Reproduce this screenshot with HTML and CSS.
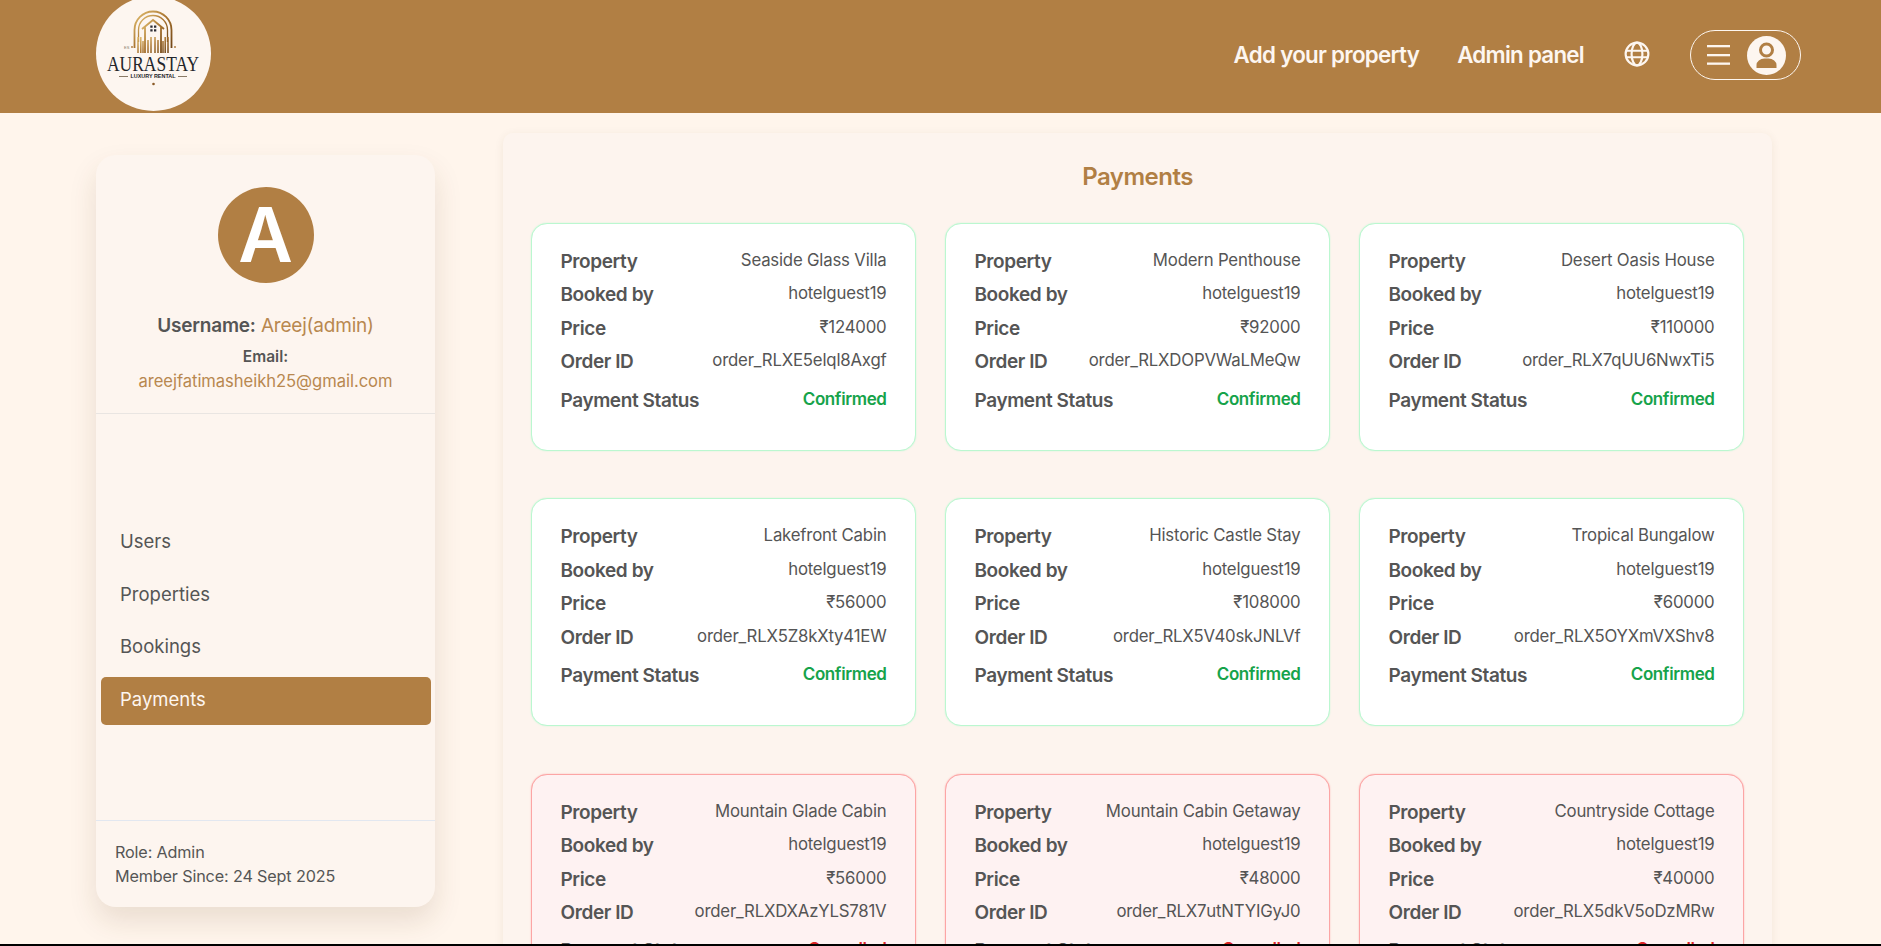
FILE: index.html
```html
<!DOCTYPE html>
<html lang="en">
<head>
<meta charset="utf-8">
<title>Aurastay</title>
<link rel="stylesheet" href="styles.css">
</head>
<body>
<div class="page">
  <header class="topbar">
    <div class="logo">
      <svg viewBox="0 0 115 115" width="115" height="115">
        <defs><linearGradient id="gold" x1="0" y1="0" x2="1" y2="1"><stop offset="0" stop-color="#e2bf70"/><stop offset=".5" stop-color="#a9742f"/><stop offset="1" stop-color="#6f4517"/></linearGradient></defs>
        <circle cx="57.5" cy="57.5" r="57.5" fill="#fdf6f0"/>
        <g fill="none" stroke="url(#gold)">
          <path d="M38.500 52V34a18.500 18.500 0 0 1 37 0V52" stroke-width="1.800"/>
          <path d="M42.500 46V34a14.500 14.500 0 0 1 29 0V46" stroke-width="1.300"/>
          <path d="M46 33l11-9 11 9M49 31V57M65 31V57" stroke-width="1.800"/>
          <path d="M42 41V57M44.800 41V57M47 45V57M52 44V57M55 41V57M59 41V57M62 44V57M67 45V57M69.200 41V57M72 41V57" stroke-width="1.500"/>
        </g>
        <path d="M54.300 29.500h2.300v2.300h-2.300zM58 29.500h2.300v2.300H58zM54.300 33.200h2.300v2.300h-2.300zM58 33.200h2.300v2.300H58z" fill="#2c2c33"/>
        <circle cx="36" cy="51" r="1" fill="#b17f44"/><circle cx="79" cy="51" r="1" fill="#b17f44"/>
        <text class="logo-es" x="28" y="52.500">ES</text>
        <text class="logo-name" x="57" y="75" text-anchor="middle" textLength="92" lengthAdjust="spacingAndGlyphs">AURASTAY</text>
        <text class="logo-sub" x="57" y="82" text-anchor="middle" textLength="45" lengthAdjust="spacingAndGlyphs">LUXURY RENTAL</text>
        <path d="M23 80.500h9M82 80.500h9" stroke="#8a7a66" stroke-width="1"/>
        <circle cx="57.500" cy="88" r="1.300" fill="#8a5a26"/>
      </svg>
    </div>
    <nav class="topnav">
      <a class="toplink">Add your property</a>
      <a class="toplink">Admin panel</a>
      <svg class="globe" viewBox="0 0 24 24" width="26" height="26" fill="none" stroke="#fdf6f0" stroke-width="2"><circle cx="12" cy="12" r="10.500"/><ellipse cx="12" cy="12" rx="5" ry="10.500"/><path d="M1.500 9h21M1.500 15h21"/></svg>
      <div class="menu-pill">
        <svg viewBox="0 0 23 20" width="23" height="20" fill="#fdf6f0"><rect y="0" width="23" height="2.300"/><rect y="9" width="23" height="2.300"/><rect y="17.500" width="23" height="2.300"/></svg>
        <svg viewBox="0 0 39 39" width="39" height="39"><circle cx="19.500" cy="19.500" r="19.500" fill="#fdf6f0"/><circle cx="19.500" cy="14" r="6" fill="none" stroke="#b17f44" stroke-width="3"/><path d="M9.500 32v-3a8 6.500 0 0 1 8-6.500h4a8 6.500 0 0 1 8 6.500v3z" fill="#b17f44"/></svg>
      </div>
    </nav>
  </header>

  <div class="content">
    <aside class="sidebar">
      <div class="profile">
        <div class="avatar">A</div>
        <p class="username"><b>Username:</b> <span class="accent">Areej(admin)</span></p>
        <p class="email-label">Email:</p>
        <p class="email accent">areejfatimasheikh25@gmail.com</p>
      </div>
      <ul class="side-menu">
        <li>Users</li>
        <li>Properties</li>
        <li>Bookings</li>
        <li class="active">Payments</li>
      </ul>
      <div class="side-foot">
        <p>Role: Admin</p>
        <p>Member Since: 24 Sept 2025</p>
      </div>
    </aside>

    <main class="panel">
      <h1 class="panel-title">Payments</h1>
      <div class="cards">
        <article class="card ok">
          <div class="row"><b>Property</b><span>Seaside Glass Villa</span></div>
          <div class="row"><b>Booked by</b><span>hotelguest19</span></div>
          <div class="row"><b>Price</b><span>₹124000</span></div>
          <div class="row"><b>Order ID</b><span>order_RLXE5elql8Axgf</span></div>
          <div class="row status"><b>Payment Status</b><strong>Confirmed</strong></div>
        </article>
        <article class="card ok">
          <div class="row"><b>Property</b><span>Modern Penthouse</span></div>
          <div class="row"><b>Booked by</b><span>hotelguest19</span></div>
          <div class="row"><b>Price</b><span>₹92000</span></div>
          <div class="row"><b>Order ID</b><span>order_RLXDOPVWaLMeQw</span></div>
          <div class="row status"><b>Payment Status</b><strong>Confirmed</strong></div>
        </article>
        <article class="card ok">
          <div class="row"><b>Property</b><span>Desert Oasis House</span></div>
          <div class="row"><b>Booked by</b><span>hotelguest19</span></div>
          <div class="row"><b>Price</b><span>₹110000</span></div>
          <div class="row"><b>Order ID</b><span>order_RLX7qUU6NwxTi5</span></div>
          <div class="row status"><b>Payment Status</b><strong>Confirmed</strong></div>
        </article>
        <article class="card ok">
          <div class="row"><b>Property</b><span>Lakefront Cabin</span></div>
          <div class="row"><b>Booked by</b><span>hotelguest19</span></div>
          <div class="row"><b>Price</b><span>₹56000</span></div>
          <div class="row"><b>Order ID</b><span>order_RLX5Z8kXty41EW</span></div>
          <div class="row status"><b>Payment Status</b><strong>Confirmed</strong></div>
        </article>
        <article class="card ok">
          <div class="row"><b>Property</b><span>Historic Castle Stay</span></div>
          <div class="row"><b>Booked by</b><span>hotelguest19</span></div>
          <div class="row"><b>Price</b><span>₹108000</span></div>
          <div class="row"><b>Order ID</b><span>order_RLX5V40skJNLVf</span></div>
          <div class="row status"><b>Payment Status</b><strong>Confirmed</strong></div>
        </article>
        <article class="card ok">
          <div class="row"><b>Property</b><span>Tropical Bungalow</span></div>
          <div class="row"><b>Booked by</b><span>hotelguest19</span></div>
          <div class="row"><b>Price</b><span>₹60000</span></div>
          <div class="row"><b>Order ID</b><span>order_RLX5OYXmVXShv8</span></div>
          <div class="row status"><b>Payment Status</b><strong>Confirmed</strong></div>
        </article>
        <article class="card bad">
          <div class="row"><b>Property</b><span>Mountain Glade Cabin</span></div>
          <div class="row"><b>Booked by</b><span>hotelguest19</span></div>
          <div class="row"><b>Price</b><span>₹56000</span></div>
          <div class="row"><b>Order ID</b><span>order_RLXDXAzYLS781V</span></div>
          <div class="row status"><b>Payment Status</b><strong>Cancelled</strong></div>
        </article>
        <article class="card bad">
          <div class="row"><b>Property</b><span>Mountain Cabin Getaway</span></div>
          <div class="row"><b>Booked by</b><span>hotelguest19</span></div>
          <div class="row"><b>Price</b><span>₹48000</span></div>
          <div class="row"><b>Order ID</b><span>order_RLX7utNTYIGyJ0</span></div>
          <div class="row status"><b>Payment Status</b><strong>Cancelled</strong></div>
        </article>
        <article class="card bad">
          <div class="row"><b>Property</b><span>Countryside Cottage</span></div>
          <div class="row"><b>Booked by</b><span>hotelguest19</span></div>
          <div class="row"><b>Price</b><span>₹40000</span></div>
          <div class="row"><b>Order ID</b><span>order_RLX5dkV5oDzMRw</span></div>
          <div class="row status"><b>Payment Status</b><strong>Cancelled</strong></div>
        </article>
      </div>
    </main>
  </div>
</div>
<div class="edge"></div>
</body>
</html>
```
FILE: styles.css
```css
* { box-sizing: border-box; }
html, body { height: 946px; margin: 0; overflow: hidden; }
body {
  background: #000;
  font-family: "Inter", "Noto Sans", sans-serif;
  color: #555;
}
p, h1, ul { margin: 0; padding: 0; }
.page { height: 944px; overflow: hidden; background: #fff5ec; }
.edge { height: 2px; background: #000; }

.topbar {
  height: 113px;
  background: #b17f44;
  display: flex;
  align-items: center;
  justify-content: space-between;
  padding: 0 80px 3px 96px;
  overflow: hidden;
}
.logo { width: 115px; height: 115px; margin-bottom: 3px; flex: none; }
.logo svg { display: block; }
.logo-name { font-family: "Liberation Serif", serif; font-size: 20px; fill: #24262b; }
.logo-sub { font-family: "Liberation Sans", sans-serif; font-size: 5px; font-weight: 700; fill: #24262b; }
.logo-es { font-family: "Liberation Sans", sans-serif; font-size: 4px; fill: #8a7a66; }
.topnav { display: flex; align-items: center; }
.toplink { font-size: 22.300px; font-weight: 600; letter-spacing: -0.700px; color: #fdf6f0; margin-right: 38px; padding-bottom: 2px; }
.globe { margin: 0 40px 3px 2px; }
.menu-pill {
  width: 111px;
  height: 50px;
  border: 1px solid #fdf6f0;
  border-radius: 25px;
  display: flex;
  align-items: center;
  justify-content: space-between;
  padding: 0 14px 0 16px;
}

.content { display: flex; align-items: flex-start; padding: 0 109px 0 96px; }
.sidebar {
  width: 339px;
  height: 752px;
  margin-top: 42px;
  flex: none;
  display: flex;
  flex-direction: column;
  background: #fdf5ef;
  border-radius: 20px;
  box-shadow: 0 14px 28px rgba(90, 60, 20, 0.13);
}
.profile {
  height: 259px;
  padding-top: 32px;
  text-align: center;
  border-bottom: 1px solid #e9e5e2;
}
.avatar {
  width: 96px;
  height: 96px;
  margin: 0 auto 29px;
  border-radius: 50%;
  background: #b17f44;
  color: #fff;
  font-size: 75px;
  font-weight: 600;
  line-height: 96px;
}
.accent { color: #b8884f; }
.username { font-size: 19px; line-height: 28px; letter-spacing: -0.200px; }
.username b { font-weight: 600; }
.email-label { font-size: 15.500px; font-weight: 600; line-height: 24px; margin-top: 5px; }
.email { font-size: 16.600px; line-height: 24px; letter-spacing: -0.050px; }
.side-menu {
  list-style: none;
  flex: 1;
  padding: 105px 4px 0 5px;
  font-size: 18.500px;
}
.side-menu li { height: 52.500px; padding: 0 0 0 19px; line-height: 44px; }
.side-menu .active {
  height: 48px;
  line-height: 44px;
  background: #b17f44;
  color: #fdf6f0;
  border-radius: 5px;
}
.side-foot { height: 87px; padding-top: 19px; padding-left: 19px; border-top: 1px solid #e2e7f0; font-size: 16.200px; line-height: 24px; letter-spacing: -0.150px; }

.panel {
  flex: 1;
  margin: 20px 0 0 68px;
  padding: 28px 28px 0;
  height: 900px;
  background: #fdf4ee;
  border-radius: 10px;
  box-shadow: 0 2px 10px rgba(90, 60, 20, 0.08);
}
.panel-title {
  font-size: 24px;
  line-height: 32px;
  font-weight: 600;
  letter-spacing: -0.500px;
  text-align: center;
  color: #b17f44;
  margin-bottom: 30px;
}
.cards { display: grid; grid-template-columns: repeat(3, 1fr); gap: 47.400px 29px; }
.card {
  height: 228px;
  padding: 23px 28.500px 0 28.500px;
  border: 1px solid;
  border-radius: 16px;
}
.card.ok { background: #fff; border-color: #bbf7d0; box-shadow: 0 0 1.500px #bbf7d0; }
.card.bad { background: #fef2f2; border-color: #fca5a5; box-shadow: 0 0 1.500px #fca5a5; }
.row {
  display: flex;
  justify-content: space-between;
  align-items: flex-start;
  height: 33.400px;
  line-height: 30px;
}
.row b { font-size: 19px; font-weight: 600; letter-spacing: -0.400px; }
.row span { font-size: 16.800px; letter-spacing: -0.200px; line-height: 27px; }
.row.status { margin-top: 5px; }
.row strong { font-size: 17px; font-weight: 600; letter-spacing: -0.400px; line-height: 27px; }
.ok strong { color: #16a34a; }
.bad strong { color: #dc2626; }
```
